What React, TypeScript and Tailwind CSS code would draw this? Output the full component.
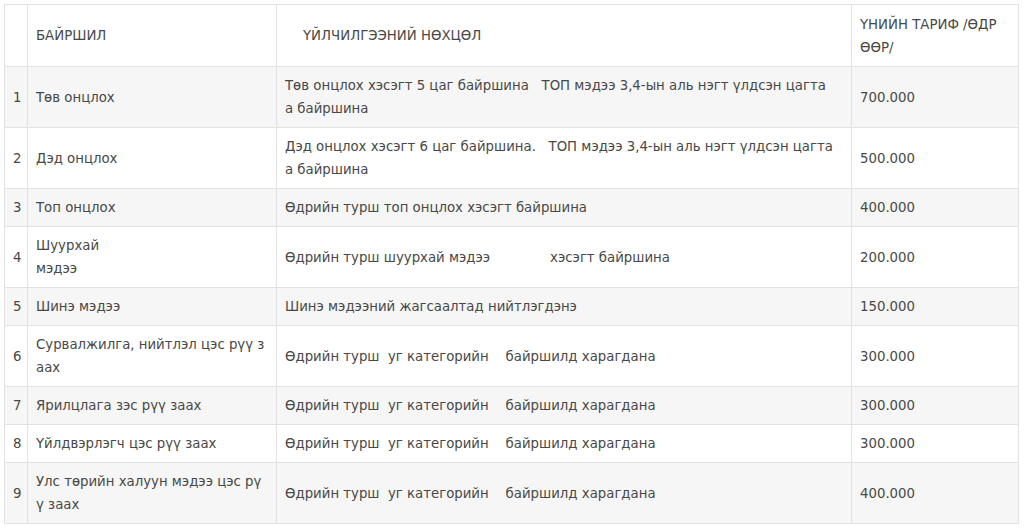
import React from "react";

type Row = { n: string; loc: React.ReactNode; cond: React.ReactNode; price: string };

const rows: Row[] = [
  {
    n: "1",
    loc: "Төв онцлох",
    cond: (
      <>
        {"Төв онцлох хэсэгт 5 цаг байршина   ТОП мэдээ 3,4-ын аль нэгт үлдсэн цагта"}
        <br />
        {"а байршина"}
      </>
    ),
    price: "700.000",
  },
  {
    n: "2",
    loc: "Дэд онцлох",
    cond: (
      <>
        {"Дэд онцлох хэсэгт 6 цаг байршина.   ТОП мэдээ 3,4-ын аль нэгт үлдсэн цагта"}
        <br />
        {"а байршина"}
      </>
    ),
    price: "500.000",
  },
  { n: "3", loc: "Топ онцлох", cond: "Өдрийн турш топ онцлох хэсэгт байршина", price: "400.000" },
  {
    n: "4",
    loc: (
      <>
        Шуурхай
        <br />
        мэдээ
      </>
    ),
    cond: (
      <>
        Өдрийн турш шуурхай мэдээ<span className="inline-block w-[60px]"></span>хэсэгт байршина
      </>
    ),
    price: "200.000",
  },
  { n: "5", loc: "Шинэ мэдээ", cond: "Шинэ мэдээний жагсаалтад нийтлэгдэнэ", price: "150.000" },
  {
    n: "6",
    loc: (
      <>
        Сурвалжилга, нийтлэл цэс рүү з
        <br />
        аах
      </>
    ),
    cond: "Өдрийн турш  уг категорийн    байршилд харагдана",
    price: "300.000",
  },
  { n: "7", loc: "Ярилцлага зэс рүү заах", cond: "Өдрийн турш  уг категорийн    байршилд харагдана", price: "300.000" },
  { n: "8", loc: "Үйлдвэрлэгч цэс рүү заах", cond: "Өдрийн турш  уг категорийн    байршилд харагдана", price: "300.000" },
  {
    n: "9",
    loc: (
      <>
        Улс төрийн халуун мэдээ цэс рү
        <br />
        ү заах
      </>
    ),
    cond: "Өдрийн турш  уг категорийн    байршилд харагдана",
    price: "400.000",
  },
];

const cell = "border border-[#e2e2e2] px-2 py-[7px] align-middle leading-[23px]";

export default function App() {
  return (
    <div
      className="bg-white w-[1024px] h-[528px] overflow-hidden pt-1 pl-1 text-[#484848] text-[13.3px]"
      style={{ fontFamily: '"DejaVu Sans", Verdana, sans-serif' }}
    >
      <table className="table-fixed border-collapse w-[1014px]">
        <colgroup>
          <col className="w-[23px]" />
          <col className="w-[249px]" />
          <col className="w-[575px]" />
          <col className="w-[167px]" />
        </colgroup>
        <thead>
          <tr className="bg-white h-[62px]">
            <th className={`${cell} font-normal text-left`}></th>
            <th className={`${cell} font-normal text-left`}>БАЙРШИЛ</th>
            <th className={`${cell} font-normal text-left pl-[26px]`}>ҮЙЛЧИЛГЭЭНИЙ НӨХЦӨЛ</th>
            <th className={`${cell} font-normal text-left leading-[21px]`}>
              ҮНИЙН ТАРИФ /ӨДР
              <br />
              ӨӨР/
            </th>
          </tr>
        </thead>
        <tbody>
          {rows.map((r, i) => (
            <tr key={r.n} className={i % 2 === 0 ? "bg-[#f6f6f6]" : "bg-white"}>
              <td className={`${cell} px-0 text-center`}>{r.n}</td>
              <td className={cell}>{r.loc}</td>
              <td className={`${cell} whitespace-pre`}>{r.cond}</td>
              <td className={cell}>{r.price}</td>
            </tr>
          ))}
        </tbody>
      </table>
    </div>
  );
}
